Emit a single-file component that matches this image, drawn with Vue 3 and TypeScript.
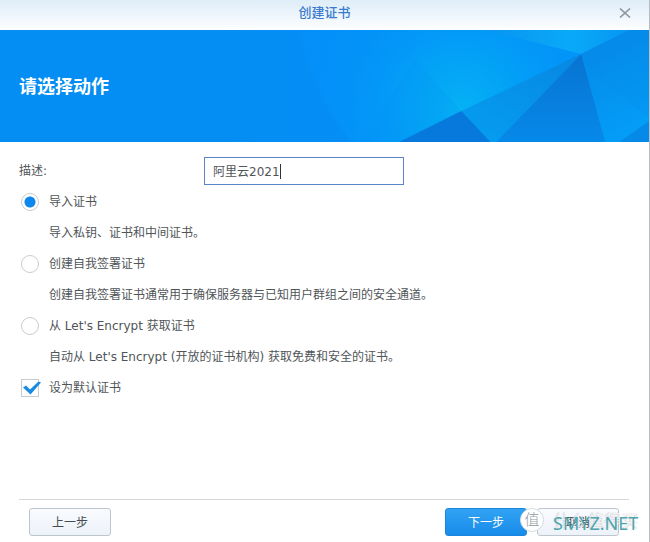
<script setup lang="ts">
import { ref } from 'vue'

interface Action {
  id: string
  label: string
  hint: string
}

const actions: Action[] = [
  { id: 'import', label: '导入证书', hint: '导入私钥、证书和中间证书。' },
  { id: 'self', label: '创建自我签署证书', hint: '创建自我签署证书通常用于确保服务器与已知用户群组之间的安全通道。' },
  { id: 'encrypt', label: "从 Let's Encrypt 获取证书", hint: "自动从 Let's Encrypt (开放的证书机构) 获取免费和安全的证书。" },
]

const description = ref('阿里云2021')
const selected = ref('import')
const isDefault = ref(true)
</script>

<template>
  <main class="dialog">
    <header class="titlebar">
      <h1>创建证书</h1>
      <button class="close" type="button" aria-label="关闭">
        <svg width="12" height="10" viewBox="0 0 12 10">
          <path d="M1 0.5 L11 9.5 M11 0.5 L1 9.5" fill="none" stroke="#8e969d" stroke-width="1.6" />
        </svg>
      </button>
    </header>

    <section class="banner">
      <svg class="facets" viewBox="0 0 430 112" preserveAspectRatio="xMaxYMid slice" aria-hidden="true">
        <defs>
          <linearGradient id="base" x1="0" y1="0" x2="1" y2="0">
            <stop offset="0" stop-color="#048df2" />
            <stop offset="0.25" stop-color="#0490f9" />
            <stop offset="1" stop-color="#0295f8" />
          </linearGradient>
          <radialGradient id="glow" gradientUnits="userSpaceOnUse" cx="242" cy="80" r="150">
            <stop offset="0" stop-color="#05b2f4" />
            <stop offset="0.4" stop-color="#03a3f6" stop-opacity="0.8" />
            <stop offset="1" stop-color="#0292f8" stop-opacity="0" />
          </radialGradient>
          <linearGradient id="top" x1="0" y1="0" x2="1" y2="0">
            <stop offset="0" stop-color="#0894f0" />
            <stop offset="0.6" stop-color="#0aa9f8" />
            <stop offset="1" stop-color="#0696f3" />
          </linearGradient>
          <linearGradient id="left" x1="1" y1="0" x2="0.2" y2="1">
            <stop offset="0" stop-color="#0787e2" />
            <stop offset="1" stop-color="#059cf0" />
          </linearGradient>
          <linearGradient id="center" x1="0.5" y1="0" x2="0.5" y2="1">
            <stop offset="0" stop-color="#0873d0" />
            <stop offset="1" stop-color="#0689ea" />
          </linearGradient>
          <linearGradient id="right" x1="0" y1="0" x2="0.3" y2="1">
            <stop offset="0" stop-color="#0686e6" />
            <stop offset="1" stop-color="#039cf6" />
          </linearGradient>
          <linearGradient id="fold" x1="0" y1="0" x2="1" y2="0">
            <stop offset="0" stop-color="#0688ea" stop-opacity="0" />
            <stop offset="1" stop-color="#0688ea" stop-opacity="0.3" />
          </linearGradient>
        </defs>
        <rect width="430" height="112" fill="url(#base)" />
        <path d="M80 0Q92 60 132 112H0V0Z" fill="url(#fold)" />
        <path d="M80 0H265L362 24L180 112H132Q92 60 80 0Z" fill="url(#glow)" />
        <path d="M196 30L242 81L180 112H140Z" fill="#0590f2" opacity="0.15" />
        <path d="M265 0H410L362 24Z" fill="url(#top)" />
        <path d="M362 24L242 81L270 112H277Z" fill="url(#left)" />
        <path d="M242 81L180 112H271Z" fill="#0879dc" />
        <path d="M362 24L277 112H386Z" fill="url(#center)" />
        <path d="M362 24L410 0H430V112H386Z" fill="url(#right)" />
        <path d="M375 44L430 88V0H410L362 24Z" fill="#078aeb" opacity="0.2" />
        <path d="M430 91L400 112H430Z" fill="#067fdf" opacity="0.6" />
      </svg>
      <h2>请选择动作</h2>
    </section>

    <form class="body" @submit.prevent>
      <div class="field">
        <label for="description">描述:</label>
        <div class="entry">
          <input id="description" v-model="description" type="text" />
          <i class="caret"></i>
        </div>
      </div>

      <template v-for="action in actions" :key="action.id">
        <label class="option">
          <input v-model="selected" type="radio" name="action" :value="action.id" />
          <span>{{ action.label }}</span>
        </label>
        <p class="hint">{{ action.hint }}</p>
      </template>

      <label class="option">
        <span class="check">
          <input v-model="isDefault" type="checkbox" />
          <svg v-if="isDefault" width="20" height="18" viewBox="0 0 20 18" aria-hidden="true">
            <path d="M1 8.5 L4 6.5 L8 10.5 L16.5 2.5 L19 3.5 L8.5 15.5 Z" fill="#1a8be0" />
          </svg>
        </span>
        <span>设为默认证书</span>
      </label>
    </form>

    <footer class="actions">
      <button class="btn" type="button">上一步</button>
      <span class="spacer"></span>
      <button class="btn primary" type="button">下一步</button>
      <button class="btn" type="button">取消</button>
      <div class="watermark">
        <span class="seal">值</span>
        <span class="brand">什么值得买</span>
        <span class="site">SMYZ.NET</span>
      </div>
    </footer>
  </main>
</template>

<style>
body {
  margin: 0;
  background: #fff;
}
</style>

<style scoped>
.dialog {
  box-sizing: border-box;
  display: flex;
  flex-direction: column;
  min-height: 100vh;
  border-right: 1px solid #b9bec6;
  background: #fff;
  color: #505558;
  font-family: "DejaVu Sans", "Noto Sans CJK SC", sans-serif;
  font-size: 12px;
  line-height: 18px;
}

.dialog * {
  box-sizing: border-box;
}

.titlebar {
  display: grid;
  grid-template-columns: 48px 1fr 48px;
  align-items: center;
  height: 30px;
  padding-bottom: 4px;
  background: linear-gradient(#deedf8, #fdfeff);
}

.titlebar h1 {
  grid-column: 2;
  margin: 0;
  text-align: center;
  font-size: 13px;
  font-weight: 500;
  color: #3a7bd0;
}

.close {
  display: flex;
  justify-content: center;
  padding: 4px;
  border: 0;
  background: none;
}

.banner {
  position: relative;
  display: flex;
  align-items: center;
  height: 112px;
  padding: 2px 19px 0;
  background: #048df2;
}

.facets {
  position: absolute;
  top: 0;
  right: 0;
  width: 66%;
  height: 100%;
}

.banner h2 {
  position: relative;
  margin: 0;
  font-size: 18px;
  line-height: 24px;
  font-weight: 700;
  color: #fff;
}

.body {
  flex: 1;
  padding: 13px 19px;
}

.field,
.option,
.hint {
  display: flex;
  align-items: center;
  min-height: 31px;
  margin: 0;
}

.field > label {
  width: 185px;
}

.entry {
  position: relative;
  width: 200px;
}

.entry input {
  display: block;
  width: 100%;
  height: 28px;
  padding: 0 8px;
  border: 1px solid #5a84c8;
  outline: 0;
  background: #fff;
  color: inherit;
  font: inherit;
}

.caret {
  position: absolute;
  top: 7px;
  left: 76px;
  width: 1px;
  height: 15px;
  background: #333;
}

.option {
  gap: 10px;
  padding-left: 2px;
}

.hint {
  padding-left: 30px;
}

.option input {
  appearance: none;
  flex: none;
  width: 18px;
  height: 18px;
  margin: 0;
  border: 1px solid #c8cccf;
  background: #fff;
}

.option input[type="radio"] {
  border-radius: 50%;
}

.option input[type="radio"]:checked {
  background: radial-gradient(circle, #0d86ee 5px, #fff 6px);
}

.check {
  position: relative;
  display: flex;
}

.check svg {
  position: absolute;
  top: 0;
  left: 1px;
}

.actions {
  position: relative;
  display: flex;
  gap: 10px;
  margin: 0 20px 0 19px;
  padding: 8px 10px 6px;
  border-top: 1px solid #d3d8dc;
}

.spacer {
  flex: 1;
}

.btn {
  width: 82px;
  height: 28px;
  padding: 2px 0 0;
  border: 1px solid #bdc6cf;
  border-radius: 3px;
  background: linear-gradient(#f9fbfe, #edf2f9);
  color: #454b50;
  font: inherit;
}

.primary {
  border-color: #1a85dc;
  background: linear-gradient(#32a3f4, #168be9);
  color: #fff;
}

.watermark {
  position: absolute;
  top: 7px;
  right: -12px;
  display: grid;
  grid-template-columns: 24px 88px;
  column-gap: 9px;
  align-items: center;
  height: 26px;
  white-space: nowrap;
  pointer-events: none;
}

.seal {
  width: 24px;
  height: 24px;
  border: 1px solid #d5dbe0;
  border-radius: 50%;
  background: #fff;
  color: #959ca2;
  font-size: 15px;
  font-weight: 300;
  line-height: 22px;
  text-align: center;
}

.brand,
.site {
  grid-row: 1;
  grid-column: 2;
}

.brand {
  padding-top: 2px;
  font-size: 17px;
  font-weight: 300;
  color: #fff;
  text-shadow: 0 0 1px #7d848a;
}

.site {
  padding-top: 6px;
  font-family: "Noto Sans", sans-serif;
  font-size: 18px;
  color: #4fa5ae;
}
</style>
